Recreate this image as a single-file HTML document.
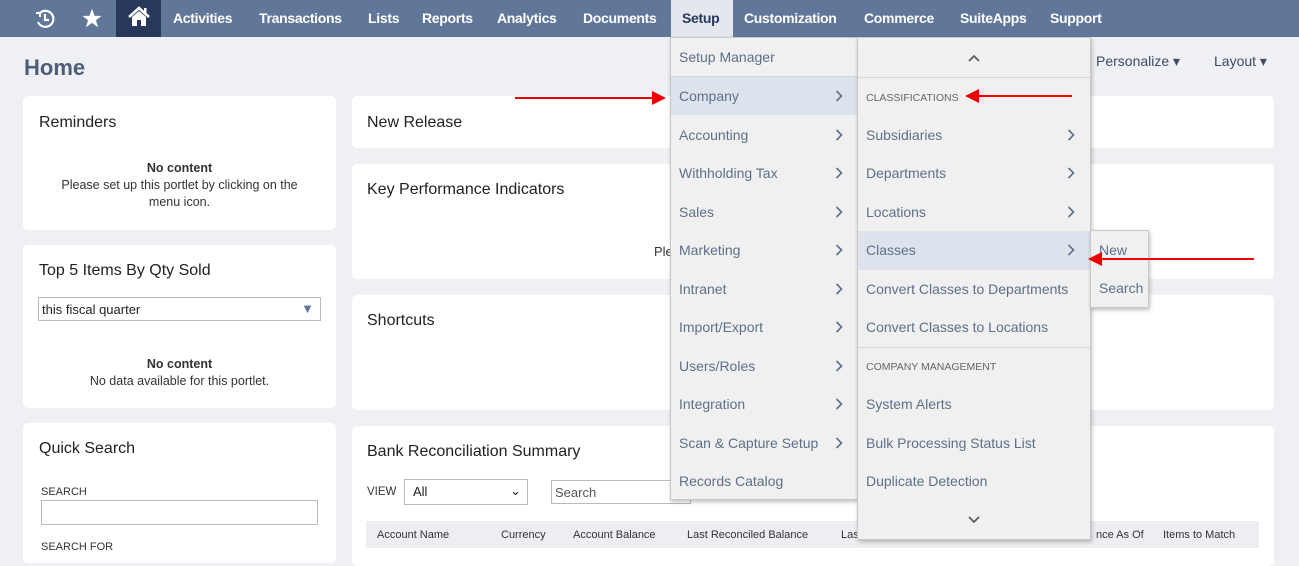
<!DOCTYPE html>
<html><head><meta charset="utf-8"><style>
*{box-sizing:border-box;margin:0;padding:0}
body{width:1299px;height:553px;overflow:hidden;background:#eff0f3;font-family:"Liberation Sans",sans-serif;position:relative;color:#222}
.nav{position:absolute;left:0;top:0;width:1299px;height:37px;background:#607799}
.nav span{position:absolute;top:10px;color:#fff;font-weight:bold;font-size:14px;letter-spacing:-0.3px}
.home{position:absolute;left:116px;top:0;width:45px;height:37px;background:#27385a}
.setup{position:absolute;left:671px;top:0;width:62px;height:37px;background:#e4e8ee}
.card{position:absolute;background:#fff;border-radius:5px}
.card h3{position:absolute;left:16px;font-weight:normal;font-size:16px;color:#222}
.abs{position:absolute}
.menu{position:absolute;background:#f0f0f0;border:1px solid #c8c8c8;box-shadow:1px 2px 4px rgba(0,0,0,.25)}
.mi{position:absolute;font-size:14px;color:#5d7089;left:8px}
.chev{position:absolute;width:8px;height:12px}
.red{position:absolute;height:2px;background:#e00}
</style></head><body>
<svg width="0" height="0" style="position:absolute"><defs><symbol id="c" viewBox="0 0 8 12"><path d="M1.5 1 L6.5 6 L1.5 11" fill="none" stroke="#5d7089" stroke-width="1.6"/></symbol></defs></svg>
<div class="nav">
<svg class="abs" style="left:34px;top:8px" width="22" height="22" viewBox="0 0 22 22"><path d="M5 6 A8 8 0 1 1 4 14" fill="none" stroke="#fff" stroke-width="2.2"/><path d="M2 5 L6 5 L6 9" fill="none" stroke="#fff" stroke-width="2"/><path d="M11 6 V12 H15" fill="none" stroke="#fff" stroke-width="2.2"/></svg>
<svg class="abs" style="left:81px;top:8px" width="22" height="21" viewBox="0 0 24 24"><path d="M12 1 L15 9 L23 9 L16.5 14 L19 22 L12 17 L5 22 L7.5 14 L1 9 L9 9Z" fill="#fff"/></svg>
<div class="home"><svg class="abs" style="left:11px;top:6px" width="24" height="22" viewBox="0 0 24 22"><path d="M2 11 L12 2 L22 11" fill="none" stroke="#fff" stroke-width="2.6"/><path d="M5 11 V20 H19 V11 L12 5Z" fill="#fff"/><rect x="10" y="14" width="4" height="6" fill="#27385a"/><rect x="17" y="2" width="2.5" height="6" fill="#fff"/></svg></div>
<span style="left:173px">Activities</span><span style="left:259px">Transactions</span><span style="left:368px">Lists</span><span style="left:422px">Reports</span><span style="left:497px">Analytics</span><span style="left:583px">Documents</span>
<div class="setup"></div><span style="left:682px;color:#27385a">Setup</span>
<span style="left:744px">Customization</span><span style="left:864px">Commerce</span><span style="left:960px">SuiteApps</span><span style="left:1050px">Support</span>
</div>
<div class="abs" style="left:24px;top:55px;font-size:22px;font-weight:bold;color:#4d5e78">Home</div>
<div class="abs" style="left:1096px;top:53px;font-size:14px;color:#3b4b66">Personalize ▾</div>
<div class="abs" style="left:1214px;top:53px;font-size:14px;color:#3b4b66">Layout ▾</div>

<div class="card" style="left:23px;top:96px;width:313px;height:134px"><h3 style="top:18px">Reminders</h3>
<div class="abs" style="left:0;width:313px;top:64px;text-align:center;font-size:12.5px;line-height:17px;color:#333"><b>No content</b><br>Please set up this portlet by clicking on the<br>menu icon.</div></div>
<div class="card" style="left:23px;top:245px;width:313px;height:163px"><h3 style="top:17px">Top 5 Items By Qty Sold</h3>
<div class="abs" style="left:15px;top:52px;width:283px;height:24px;border:1px solid #bbb;font-size:13px;padding:4px 3px">this fiscal quarter<span style="position:absolute;right:6px;top:3px;color:#607799">▼</span></div>
<div class="abs" style="left:0;width:313px;top:111px;text-align:center;font-size:12.5px;line-height:17px;color:#333"><b>No content</b><br>No data available for this portlet.</div></div>
<div class="card" style="left:23px;top:423px;width:313px;height:140px"><h3 style="top:17px">Quick Search</h3>
<div class="abs" style="left:18px;top:63px;font-size:11px;color:#333">SEARCH</div>
<div class="abs" style="left:18px;top:77px;width:277px;height:25px;border:1px solid #bbb"></div>
<div class="abs" style="left:18px;top:118px;font-size:11px;color:#333">SEARCH FOR</div></div>

<div class="card" style="left:352px;top:96px;width:922px;height:52px"><h3 style="top:18px;left:15px">New Release</h3></div>
<div class="card" style="left:352px;top:164px;width:922px;height:115px"><h3 style="top:17px;left:15px">Key Performance Indicators</h3><div class="abs" style="left:302px;top:80px;font-size:13px;color:#333">Ple</div></div>
<div class="card" style="left:352px;top:295px;width:922px;height:115px"><h3 style="top:17px;left:15px">Shortcuts</h3></div>
<div class="card" style="left:352px;top:426px;width:922px;height:140px"><h3 style="top:17px;left:15px">Bank Reconciliation Summary</h3>
<div class="abs" style="left:15px;top:60px;font-size:11.5px;color:#333">VIEW</div>
<div class="abs" style="left:52px;top:53px;width:124px;height:26px;border:1px solid #bbb;font-size:13px;padding:4px 8px">All<span style="position:absolute;right:6px;top:3px">⌄</span></div>
<div class="abs" style="left:199px;top:54px;width:140px;height:24px;border:1px solid #bbb;font-size:13px;padding:4px 3px;color:#555">Search</div>
<div class="abs" style="left:14px;top:95px;width:893px;height:27px;background:#eceef2;font-size:11px;color:#333">
<span class="abs" style="left:11px;top:8px">Account Name</span><span class="abs" style="left:135px;top:8px">Currency</span><span class="abs" style="left:207px;top:8px">Account Balance</span><span class="abs" style="left:321px;top:8px">Last Reconciled Balance</span><span class="abs" style="left:475px;top:8px">Las</span><span class="abs" style="left:730px;top:8px">nce As Of</span><span class="abs" style="left:797px;top:8px">Items to Match</span></div></div>

<div class="menu" style="left:670px;top:37px;width:188px;height:463px">
<div class="abs" style="left:0;top:38px;width:186px;height:39px;background:#dde3ec"></div>
<div class="abs" style="left:0;top:38px;width:186px;height:1px;background:#d6d6d6"></div>
<div class="mi" style="top:11px">Setup Manager</div>
<div class="mi" style="top:50px">Company</div>
<div class="mi" style="top:89px">Accounting</div>
<div class="mi" style="top:127px">Withholding Tax</div>
<div class="mi" style="top:166px">Sales</div>
<div class="mi" style="top:204px">Marketing</div>
<div class="mi" style="top:243px">Intranet</div>
<div class="mi" style="top:281px">Import/Export</div>
<div class="mi" style="top:320px">Users/Roles</div>
<div class="mi" style="top:358px">Integration</div>
<div class="mi" style="top:397px">Scan &amp; Capture Setup</div>
<div class="mi" style="top:435px">Records Catalog</div>
<svg class="chev" style="left:164px;top:52px"><use href="#c"/></svg><svg class="chev" style="left:164px;top:91px"><use href="#c"/></svg><svg class="chev" style="left:164px;top:129px"><use href="#c"/></svg><svg class="chev" style="left:164px;top:168px"><use href="#c"/></svg><svg class="chev" style="left:164px;top:206px"><use href="#c"/></svg><svg class="chev" style="left:164px;top:245px"><use href="#c"/></svg><svg class="chev" style="left:164px;top:283px"><use href="#c"/></svg><svg class="chev" style="left:164px;top:322px"><use href="#c"/></svg><svg class="chev" style="left:164px;top:360px"><use href="#c"/></svg><svg class="chev" style="left:164px;top:399px"><use href="#c"/></svg>
</div>
<div class="menu" style="left:857px;top:37px;width:234px;height:503px">
<svg class="abs" style="left:110px;top:16px" width="12" height="8"><path d="M1 7 L6 2 L11 7" fill="none" stroke="#555" stroke-width="1.6"/></svg>
<div class="abs" style="left:0;top:39px;width:232px;height:1px;background:#d6d6d6"></div>
<div class="abs" style="left:8px;top:54px;font-size:10.5px;color:#666">CLASSIFICATIONS</div>
<div class="abs" style="left:0;top:193px;width:232px;height:39px;background:#dde3ec"></div>
<div class="mi" style="top:89px">Subsidiaries</div>
<div class="mi" style="top:127px">Departments</div>
<div class="mi" style="top:166px">Locations</div>
<div class="mi" style="top:204px">Classes</div>
<div class="mi" style="top:243px">Convert Classes to Departments</div>
<div class="mi" style="top:281px">Convert Classes to Locations</div>
<div class="abs" style="left:0;top:309px;width:232px;height:1px;background:#d6d6d6"></div>
<div class="abs" style="left:8px;top:323px;font-size:10.5px;color:#666">COMPANY MANAGEMENT</div>
<div class="mi" style="top:358px">System Alerts</div>
<div class="mi" style="top:397px">Bulk Processing Status List</div>
<div class="mi" style="top:435px">Duplicate Detection</div>
<svg class="abs" style="left:110px;top:478px" width="12" height="8"><path d="M1 1 L6 6 L11 1" fill="none" stroke="#555" stroke-width="1.6"/></svg>
<svg class="chev" style="left:209px;top:91px"><use href="#c"/></svg><svg class="chev" style="left:209px;top:129px"><use href="#c"/></svg><svg class="chev" style="left:209px;top:168px"><use href="#c"/></svg><svg class="chev" style="left:209px;top:206px"><use href="#c"/></svg>
</div>
<div class="menu" style="left:1090px;top:230px;width:59px;height:78px">
<div class="mi" style="top:11px">New</div><div class="mi" style="top:49px">Search</div></div>

<div class="red" style="left:515px;top:97px;width:145px"></div>
<svg class="abs" style="left:652px;top:91px" width="14" height="14"><path d="M0 0 L14 7 L0 14Z" fill="#e00"/></svg>
<div class="red" style="left:975px;top:95px;width:97px"></div>
<svg class="abs" style="left:965px;top:89px" width="14" height="14"><path d="M14 0 L0 7 L14 14Z" fill="#e00"/></svg>
<div class="red" style="left:1098px;top:258px;width:156px"></div>
<svg class="abs" style="left:1088px;top:252px" width="14" height="14"><path d="M14 0 L0 7 L14 14Z" fill="#e00"/></svg>
</body></html>
